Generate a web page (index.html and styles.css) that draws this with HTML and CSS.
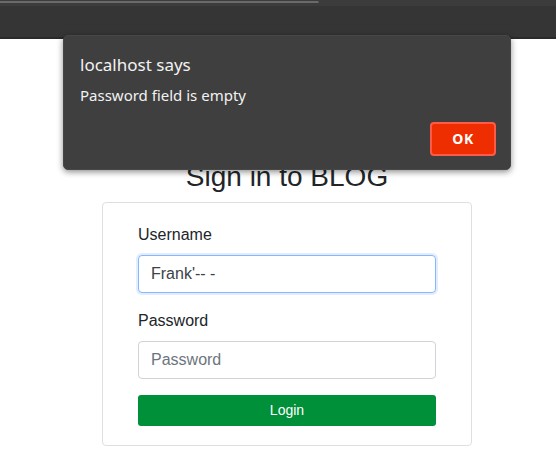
FILE: index.html
```html
<!DOCTYPE html>
<html lang="en">
<head>
<meta charset="utf-8">
<title>Sign in to BLOG</title>
<link rel="stylesheet" href="styles.css">
</head>
<body>
<div class="chrome">
  <div class="tabstrip"><div class="tabline"></div></div>
  <div class="toolbar"></div>
</div>
<main class="page">
  <div class="wrap">
    <h3 class="title">Sign in to BLOG</h3>
    <form class="card">
      <div class="field">
        <label class="label">Username</label>
        <div class="input focused">Frank'-- -</div>
      </div>
      <div class="field">
        <label class="label">Password</label>
        <div class="input placeholder">Password</div>
      </div>
      <div class="btn-login">Login</div>
    </form>
  </div>
</main>
<div class="dialog">
  <div class="dlg-title">localhost says</div>
  <div class="dlg-msg">Password field is empty</div>
  <div class="dlg-actions"><div class="dlg-ok">OK</div></div>
</div>
</body>
</html>
```
FILE: styles.css
```css
html, body {
  margin: 0;
  padding: 0;
  background: #ffffff;
}
body {
  width: 556px;
  height: 464px;
  overflow: hidden;
  font-family: "Liberation Sans", Arial, sans-serif;
  color: #212529;
  position: relative;
}
.chrome {
  height: 39px;
  display: flex;
  flex-direction: column;
}
.tabstrip {
  height: 6px;
  background: #3c3c3c;
  display: flex;
  align-items: flex-start;
}
.tabline {
  width: 318px;
  height: 2px;
  margin-top: 1px;
  background: #6a6a6a;
  border-right: 1px solid #555;
}
.toolbar {
  flex: 1;
  background: #353535;
  border-bottom: 2px solid #2a2a2a;
}
.page {
  display: block;
}
.wrap {
  width: 370px;
  margin-left: 102px;
  padding-top: 121px;
}
.title {
  margin: 0 0 8px;
  font-size: 28px;
  font-weight: 400;
  line-height: 1.2;
  text-align: center;
  color: #212529;
}
.card {
  margin: 0;
  border: 1px solid #dfdfdf;
  border-radius: 4px;
  padding: 20px 35px 19px 35px;
  display: flex;
  flex-direction: column;
  gap: 16px;
}
.field {
  display: flex;
  flex-direction: column;
}
.label {
  font-size: 16px;
  line-height: 24px;
  margin-bottom: 8px;
  color: #212529;
}
.input {
  box-sizing: border-box;
  height: 38px;
  padding: 6px 12px;
  border: 1px solid #ced4da;
  border-radius: 4px;
  font-size: 16px;
  line-height: 24px;
  color: #3c4248;
  background: #fff;
}
.input.focused {
  border-color: #86b7fe;
  box-shadow: 0 0 0 2px rgba(13, 110, 253, 0.12);
}
.input.placeholder {
  color: #6c757d;
}
.btn-login {
  box-sizing: border-box;
  height: 31px;
  background: #00903a;
  border-radius: 3px;
  color: #ffffff;
  font-size: 14px;
  line-height: 31px;
  text-align: center;
}
.dialog {
  position: absolute;
  left: 63px;
  top: 35px;
  width: 448px;
  height: 135px;
  box-sizing: border-box;
  background: #3f3f3f;
  border: 1px solid #474747;
  border-radius: 5px;
  box-shadow: 0 2px 6px rgba(0, 0, 0, 0.45);
  padding: 18px 14px 13px 16px;
  display: flex;
  flex-direction: column;
  font-family: "Noto Sans", "DejaVu Sans", sans-serif;
  color: #f2f2f2;
}
.dlg-title {
  font-size: 17px;
  line-height: 21px;
}
.dlg-msg {
  margin-top: 11px;
  font-size: 15px;
  line-height: 19px;
}
.dlg-actions {
  margin-top: auto;
  display: flex;
  justify-content: flex-end;
}
.dlg-ok {
  box-sizing: border-box;
  width: 66px;
  height: 34px;
  background: #ee2d00;
  border: 2px solid #ff5a48;
  border-radius: 4px;
  color: #ffffff;
  font-weight: 700;
  font-size: 14px;
  letter-spacing: 0.5px;
  line-height: 30px;
  text-align: center;
}
```
